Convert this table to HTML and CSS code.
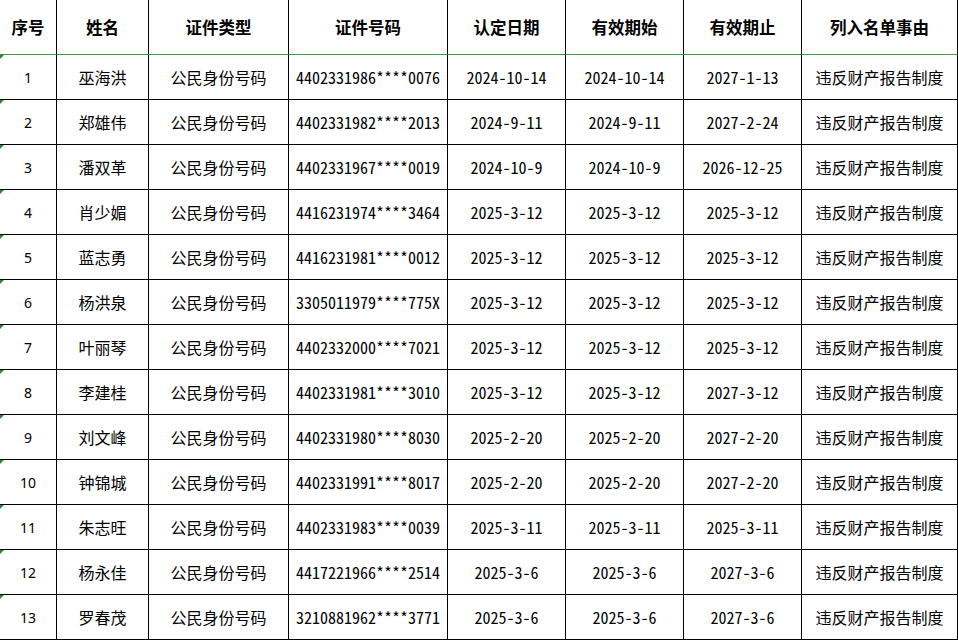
FILE: index.html
```html
<!DOCTYPE html>
<html lang="zh-CN">
<head>
<meta charset="utf-8">
<title>名单</title>
<link rel="stylesheet" href="styles.css">
</head>
<body>
<div class="sheet">
  <div class="cell head">序号</div><div class="cell head">姓名</div><div class="cell head">证件类型</div><div class="cell head">证件号码</div><div class="cell head">认定日期</div><div class="cell head">有效期始</div><div class="cell head">有效期止</div><div class="cell head">列入名单事由</div>

  <div class="cell seq">1</div><div class="cell">巫海洪</div><div class="cell">公民身份号码</div><div class="cell num">4402331986****0076</div><div class="cell num">2024-10-14</div><div class="cell num">2024-10-14</div><div class="cell num">2027-1-13</div><div class="cell">违反财产报告制度</div>
  <div class="cell seq">2</div><div class="cell">郑雄伟</div><div class="cell">公民身份号码</div><div class="cell num">4402331982****2013</div><div class="cell num">2024-9-11</div><div class="cell num">2024-9-11</div><div class="cell num">2027-2-24</div><div class="cell">违反财产报告制度</div>
  <div class="cell seq">3</div><div class="cell">潘双革</div><div class="cell">公民身份号码</div><div class="cell num">4402331967****0019</div><div class="cell num">2024-10-9</div><div class="cell num">2024-10-9</div><div class="cell num">2026-12-25</div><div class="cell">违反财产报告制度</div>
  <div class="cell seq">4</div><div class="cell">肖少媚</div><div class="cell">公民身份号码</div><div class="cell num">4416231974****3464</div><div class="cell num">2025-3-12</div><div class="cell num">2025-3-12</div><div class="cell num">2025-3-12</div><div class="cell">违反财产报告制度</div>
  <div class="cell seq">5</div><div class="cell">蓝志勇</div><div class="cell">公民身份号码</div><div class="cell num">4416231981****0012</div><div class="cell num">2025-3-12</div><div class="cell num">2025-3-12</div><div class="cell num">2025-3-12</div><div class="cell">违反财产报告制度</div>
  <div class="cell seq">6</div><div class="cell">杨洪泉</div><div class="cell">公民身份号码</div><div class="cell num">3305011979****775X</div><div class="cell num">2025-3-12</div><div class="cell num">2025-3-12</div><div class="cell num">2025-3-12</div><div class="cell">违反财产报告制度</div>
  <div class="cell seq">7</div><div class="cell">叶丽琴</div><div class="cell">公民身份号码</div><div class="cell num">4402332000****7021</div><div class="cell num">2025-3-12</div><div class="cell num">2025-3-12</div><div class="cell num">2025-3-12</div><div class="cell">违反财产报告制度</div>
  <div class="cell seq">8</div><div class="cell">李建桂</div><div class="cell">公民身份号码</div><div class="cell num">4402331981****3010</div><div class="cell num">2025-3-12</div><div class="cell num">2025-3-12</div><div class="cell num">2027-3-12</div><div class="cell">违反财产报告制度</div>
  <div class="cell seq">9</div><div class="cell">刘文峰</div><div class="cell">公民身份号码</div><div class="cell num">4402331980****8030</div><div class="cell num">2025-2-20</div><div class="cell num">2025-2-20</div><div class="cell num">2027-2-20</div><div class="cell">违反财产报告制度</div>
  <div class="cell seq">10</div><div class="cell">钟锦城</div><div class="cell">公民身份号码</div><div class="cell num">4402331991****8017</div><div class="cell num">2025-2-20</div><div class="cell num">2025-2-20</div><div class="cell num">2027-2-20</div><div class="cell">违反财产报告制度</div>
  <div class="cell seq">11</div><div class="cell">朱志旺</div><div class="cell">公民身份号码</div><div class="cell num">4402331983****0039</div><div class="cell num">2025-3-11</div><div class="cell num">2025-3-11</div><div class="cell num">2025-3-11</div><div class="cell">违反财产报告制度</div>
  <div class="cell seq">12</div><div class="cell">杨永佳</div><div class="cell">公民身份号码</div><div class="cell num">4417221966****2514</div><div class="cell num">2025-3-6</div><div class="cell num">2025-3-6</div><div class="cell num">2027-3-6</div><div class="cell">违反财产报告制度</div>
  <div class="cell seq">13</div><div class="cell">罗春茂</div><div class="cell">公民身份号码</div><div class="cell num">3210881962****3771</div><div class="cell num">2025-3-6</div><div class="cell num">2025-3-6</div><div class="cell num">2027-3-6</div><div class="cell">违反财产报告制度</div>
</div>
</body>
</html>
```

FILE: styles.css
```css
html, body {
  margin: 0;
  padding: 0;
  background: #ffffff;
}

body {
  font-family: "Noto Sans CJK SC", "Noto Sans", sans-serif;
  color: #000000;
  overflow: hidden;
}

.sheet {
  display: grid;
  grid-template-columns: 57px 92px 140px 159px 118px 118px 118px 156px;
  grid-template-rows: 55px;
  grid-auto-rows: 45px;
  width: 958px;
}

.cell {
  box-sizing: border-box;
  border-right: 1px solid #000000;
  border-bottom: 1px solid #000000;
  display: flex;
  align-items: center;
  justify-content: center;
  font-size: 16px;
  white-space: nowrap;
  position: relative;
}

.head {
  font-weight: 700;
  font-size: 16.5px;
  border-bottom-color: #3c9c3c;
}

.num {
  font-family: "Noto Sans Mono CJK SC", "Noto Sans CJK SC", "DejaVu Sans", sans-serif;
  font-size: 16px;
}

.seq {
  font-family: "Noto Sans", "Noto Sans CJK SC", sans-serif;
  font-size: 14px;
}

.seq::before {
  content: "";
  position: absolute;
  left: 0;
  top: 0;
  width: 0;
  height: 0;
  border-top: 4px solid #2a8a2a;
  border-right: 4px solid transparent;
}
```
